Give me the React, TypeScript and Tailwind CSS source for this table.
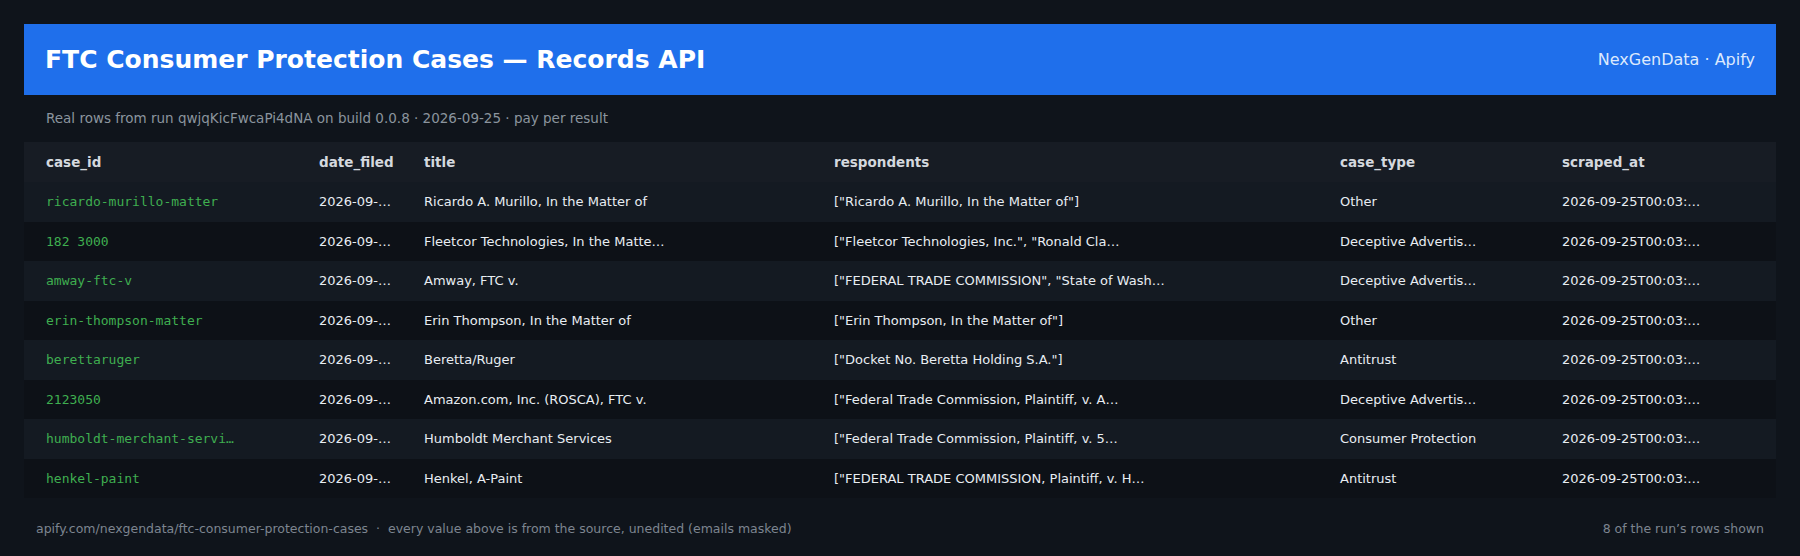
import * as React from 'react'

interface ICaseRow {
    caseId: string
    dateFiled: string
    title: string
    respondents: string
    caseType: string
    scrapedAt: string
}

const rows: ICaseRow[] = [
    {
        caseId: 'ricardo-murillo-matter',
        dateFiled: '2026-09-…',
        title: 'Ricardo A. Murillo, In the Matter of',
        respondents: '["Ricardo A. Murillo, In the Matter of"]',
        caseType: 'Other',
        scrapedAt: '2026-09-25T00:03:…',
    },
    {
        caseId: '182 3000',
        dateFiled: '2026-09-…',
        title: 'Fleetcor Technologies, In the Matte…',
        respondents: '["Fleetcor Technologies, Inc.", "Ronald Cla…',
        caseType: 'Deceptive Advertis…',
        scrapedAt: '2026-09-25T00:03:…',
    },
    {
        caseId: 'amway-ftc-v',
        dateFiled: '2026-09-…',
        title: 'Amway, FTC v.',
        respondents: '["FEDERAL TRADE COMMISSION", "State of Wash…',
        caseType: 'Deceptive Advertis…',
        scrapedAt: '2026-09-25T00:03:…',
    },
    {
        caseId: 'erin-thompson-matter',
        dateFiled: '2026-09-…',
        title: 'Erin Thompson, In the Matter of',
        respondents: '["Erin Thompson, In the Matter of"]',
        caseType: 'Other',
        scrapedAt: '2026-09-25T00:03:…',
    },
    {
        caseId: 'berettaruger',
        dateFiled: '2026-09-…',
        title: 'Beretta/Ruger',
        respondents: '["Docket No. Beretta Holding S.A."]',
        caseType: 'Antitrust',
        scrapedAt: '2026-09-25T00:03:…',
    },
    {
        caseId: '2123050',
        dateFiled: '2026-09-…',
        title: 'Amazon.com, Inc. (ROSCA), FTC v.',
        respondents: '["Federal Trade Commission, Plaintiff, v. A…',
        caseType: 'Deceptive Advertis…',
        scrapedAt: '2026-09-25T00:03:…',
    },
    {
        caseId: 'humboldt-merchant-servi…',
        dateFiled: '2026-09-…',
        title: 'Humboldt Merchant Services',
        respondents: '["Federal Trade Commission, Plaintiff, v. 5…',
        caseType: 'Consumer Protection',
        scrapedAt: '2026-09-25T00:03:…',
    },
    {
        caseId: 'henkel-paint',
        dateFiled: '2026-09-…',
        title: 'Henkel, A-Paint',
        respondents: '["FEDERAL TRADE COMMISSION, Plaintiff, v. H…',
        caseType: 'Antitrust',
        scrapedAt: '2026-09-25T00:03:…',
    },
]

const columns = ['case_id', 'date_filed', 'title', 'respondents', 'case_type', 'scraped_at']

const gridCols = 'grid grid-cols-[273px_105px_410px_506px_222px_236px]'

const App: React.FunctionComponent = () => {
    return (
        <div
            className="w-full h-[556px] bg-[#0f141b] pt-6 px-6 overflow-hidden"
            style={{ fontFamily: '"DejaVu Sans", sans-serif' }}
        >
            <div className="h-[71px] bg-[#1f6feb] flex flex-row items-center justify-between px-[21px]">
                <div className="text-white font-bold text-[25px] leading-none">
                    FTC Consumer Protection Cases — Records API
                </div>
                <div className="text-[#dce9fd] text-[16px] leading-none">NexGenData · Apify</div>
            </div>
            <div className="h-[47px] flex items-center px-[22px] text-[13.5px] text-[#8b949e]">
                Real rows from run qwjqKicFwcaPi4dNA on build 0.0.8 · 2026-09-25 · pay per result
            </div>
            <div className="flex flex-col">
                <div className={`${gridCols} h-[40px] items-center bg-[#171c24]`}>
                    {columns.map((c) => (
                        <div key={c} className="pl-[22px] text-[13.5px] font-bold text-[#d4d8de] whitespace-nowrap">
                            {c}
                        </div>
                    ))}
                </div>
                {rows.map((r, i) => (
                    <div
                        key={r.caseId}
                        className={`${gridCols} h-[39.5px] items-center text-[13px] text-[#e8edf2] whitespace-nowrap ${
                            i % 2 === 0 ? 'bg-[#141a22]' : 'bg-[#0d1117]'
                        }`}
                    >
                        <div className="pl-[22px] text-[#3fae50]" style={{ fontFamily: '"DejaVu Sans Mono", monospace' }}>
                            {r.caseId}
                        </div>
                        <div className="pl-[22px]">{r.dateFiled}</div>
                        <div className="pl-[22px]">{r.title}</div>
                        <div className="pl-[22px]">{r.respondents}</div>
                        <div className="pl-[22px]">{r.caseType}</div>
                        <div className="pl-[22px]">{r.scrapedAt}</div>
                    </div>
                ))}
            </div>
            <div className="h-[62px] flex flex-row items-center justify-between px-3 text-[12.5px] text-[#7d8590]">
                <div className="whitespace-pre">
                    apify.com/nexgendata/ftc-consumer-protection-cases  ·  every value above is from the source, unedited (emails masked)
                </div>
                <div>8 of the run’s rows shown</div>
            </div>
        </div>
    )
}

export default App
